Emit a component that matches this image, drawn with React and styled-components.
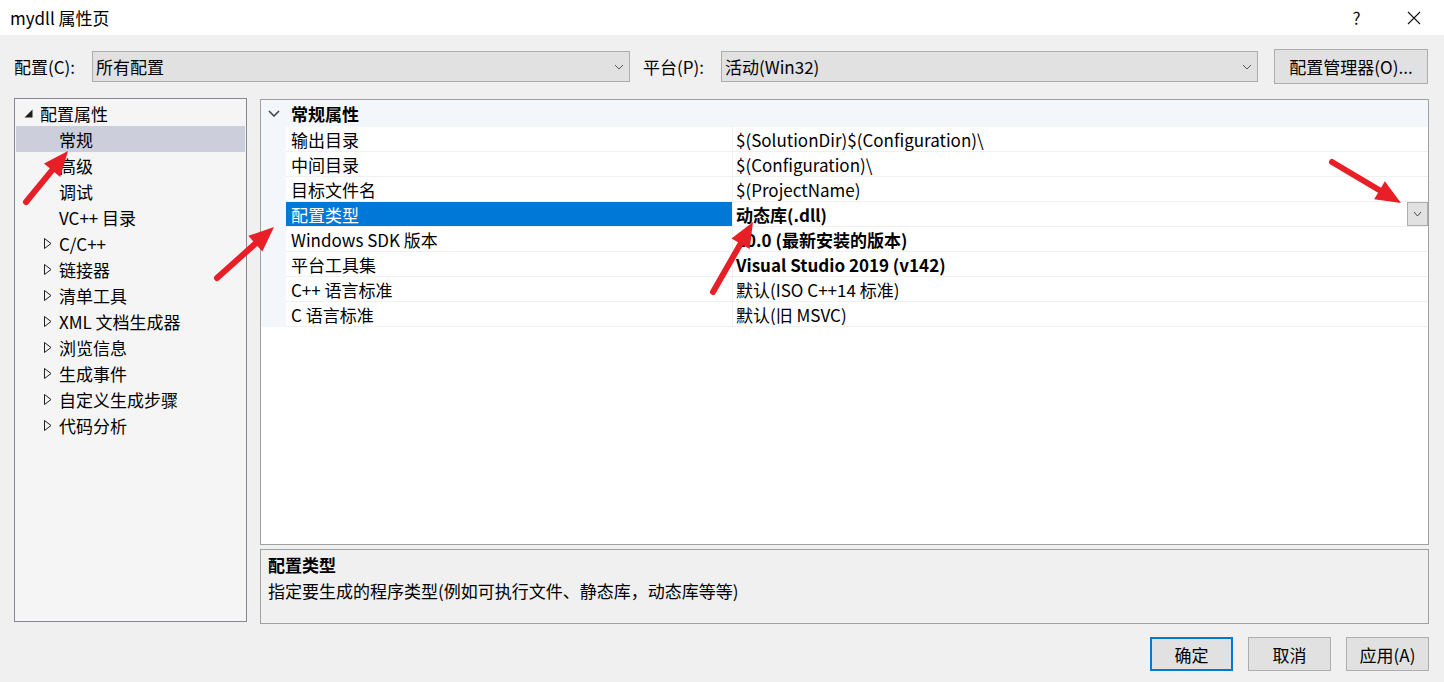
import React from 'react'
import styled, { createGlobalStyle } from 'styled-components';

const GlobalStyle = createGlobalStyle`
html, body {
  margin : 0;
  padding : 0;
  background : #f0f0f0;
}
body {
  font-family : "Noto Sans CJK SC", "Noto Sans", sans-serif;
  font-size : 17px;
  color : #000;
}
`;

const Window = styled.div`
position : relative;
width : 1444px;
height : 682px;
background : #f0f0f0;
display : flex;
flex-direction : column;
overflow : hidden;
`;

const TitleBar = styled.div`
height : 35px;
background : #fff;
display : flex;
align-items : center;
padding : 0 2px 0 10px;
`;

const Title = styled.div`
flex : 1;
font-size : 17px;
`;

const TitleButton = styled.div`
width : 57px;
height : 35px;
display : flex;
align-items : center;
justify-content : center;
font-size : 17px;
color : #111;
`;

const Body = styled.div`
flex : 1;
display : flex;
flex-direction : column;
padding : 14px 15px 0 14px;
`;

const ConfigRow = styled.div`
height : 35px;
display : flex;
align-items : center;
`;

const Label = styled.div`
width : ${({ w }) => w}px;
margin-left : ${({ ml }) => ml || 0}px;
flex-shrink : 0;
`;

const Select = styled.div`
width : ${({ w }) => w}px;
height : 31px;
box-sizing : border-box;
background : #e1e1e1;
border : 1px solid #adadad;
display : flex;
align-items : center;
justify-content : space-between;
padding : 0 5px 0 3px;
flex-shrink : 0;
`;

const Button = styled.div`
width : ${({ w }) => w || 83}px;
height : ${({ h }) => h || 34}px;
box-sizing : border-box;
margin-left : ${({ ml }) => ml || 0}px;
background : #e1e1e1;
border : ${({ primary }) => primary ? '2px solid #0078d7' : '1px solid #adadad'};
display : flex;
align-items : center;
justify-content : center;
flex-shrink : 0;
`;

const Main = styled.div`
margin-top : 14px;
display : flex;
gap : 13px;
height : 526px;
`;

const Tree = styled.div`
width : 233px;
height : 524px;
box-sizing : border-box;
border : 1px solid #828790;
background : #f5f5f5;
padding : 1px;
`;

const TreeRow = styled.div`
height : 26px;
display : flex;
align-items : center;
padding-left : ${({ level }) => level * 19 + 4}px;
background : ${({ selected }) => selected ? '#cccedb' : 'transparent'};
`;

const Twisty = styled.div`
width : 20px;
height : 26px;
display : flex;
align-items : center;
padding-left : ${({ open }) => open ? 4 : 5}px;
box-sizing : border-box;
flex-shrink : 0;
`;

const RightCol = styled.div`
flex : 1;
display : flex;
flex-direction : column;
padding-top : 1px;
gap : 4px;
`;

const Grid = styled.div`
height : 446px;
box-sizing : border-box;
border : 1px solid #a0a0a0;
background : #fff;
`;

const GroupHeader = styled.div`
height : 27px;
display : flex;
align-items : center;
background : #f3f6fb;
font-weight : bold;
`;

const GroupName = styled.span`
padding-left : 5px;
`;

const Strip = styled.div`
width : 25px;
align-self : stretch;
background : #f3f6fb;
display : flex;
align-items : center;
justify-content : center;
flex-shrink : 0;
`;

const PropRow = styled.div`
height : 25px;
display : flex;
`;

const NameCell = styled.div`
width : 447px;
box-sizing : border-box;
padding-left : 5px;
display : flex;
align-items : center;
border-bottom : 1px solid #f0f0f0;
border-right : 1px solid #f0f0f0;
background : ${({ selected }) => selected ? '#0078d7' : 'transparent'};
color : ${({ selected }) => selected ? '#fff' : '#000'};
`;

const ValueCell = styled.div`
flex : 1;
box-sizing : border-box;
padding-left : 3px;
display : flex;
align-items : center;
justify-content : space-between;
border-bottom : 1px solid #f0f0f0;
font-weight : ${({ bold }) => bold ? 'bold' : 'normal'};
`;

const DropButton = styled.div`
width : 21px;
height : 24px;
box-sizing : border-box;
background : #e1e1e1;
border : 1px solid #adadad;
display : flex;
align-items : center;
justify-content : center;
`;

const Desc = styled.div`
height : 75px;
box-sizing : border-box;
border : 1px solid #a0a0a0;
background : #f0f0f0;
padding : 2px 7px;
font-size : 17px;
line-height : 26px;
`;

const DescTitle = styled.div`
font-weight : bold;
`;

const Footer = styled.div`
margin-top : 13px;
display : flex;
justify-content : flex-end;
gap : 15px;
`;

const Overlay = styled.svg`
position : absolute;
left : 0;
top : 0;
pointer-events : none;
`;

const Chevron = ({ w = 8, h = 4, color = '#555', sw = 1 }) => (
  <svg width={w + 2} height={h + 2} viewBox={`-1 -1 ${w + 2} ${h + 2}`}>
    <polyline points={`0,0 ${w / 2},${h} ${w},0`} fill="none" stroke={color} strokeWidth={sw} />
  </svg>
);

const OpenIcon = () => (
  <svg width="9" height="9" viewBox="0 0 9 9">
    <polygon points="8.5,0.5 8.5,8.5 0.5,8.5" fill="#1e1e1e" />
  </svg>
);

const ClosedIcon = () => (
  <svg width="8" height="11" viewBox="0 0 8 11">
    <polygon points="0.5,0.5 7,5.5 0.5,10.5" fill="none" stroke="#1e1e1e" strokeWidth="1" />
  </svg>
);

const Arrow = ({ from, to }) => {
  const dx = to[0] - from[0];
  const dy = to[1] - from[1];
  const len = Math.hypot(dx, dy);
  const ux = dx / len, uy = dy / len;
  const bx = to[0] - ux * 25, by = to[1] - uy * 25;
  const nx = -uy * 10.5, ny = ux * 10.5;
  return (
    <g>
      <line x1={from[0]} y1={from[1]} x2={bx + ux * 4} y2={by + uy * 4} stroke="#e81f27" strokeWidth="6" strokeLinecap="round" />
      <polygon points={`${to[0]},${to[1]} ${bx + nx},${by + ny} ${bx - nx},${by - ny}`} fill="#e81f27" />
    </g>
  );
};

const TreeItems = [
  { name : "配置属性", level : 0, twisty : "open" },
  { name : "常规", level : 1, selected : true },
  { name : "高级", level : 1 },
  { name : "调试", level : 1 },
  { name : "VC++ 目录", level : 1 },
  { name : "C/C++", level : 1, twisty : "closed" },
  { name : "链接器", level : 1, twisty : "closed" },
  { name : "清单工具", level : 1, twisty : "closed" },
  { name : "XML 文档生成器", level : 1, twisty : "closed" },
  { name : "浏览信息", level : 1, twisty : "closed" },
  { name : "生成事件", level : 1, twisty : "closed" },
  { name : "自定义生成步骤", level : 1, twisty : "closed" },
  { name : "代码分析", level : 1, twisty : "closed" },
]

const Props = [
  { name : "输出目录", value : "$(SolutionDir)$(Configuration)\\" },
  { name : "中间目录", value : "$(Configuration)\\" },
  { name : "目标文件名", value : "$(ProjectName)" },
  { name : "配置类型", value : "动态库(.dll)", bold : true, selected : true },
  { name : "Windows SDK 版本", value : "10.0 (最新安装的版本)", bold : true },
  { name : "平台工具集", value : "Visual Studio 2019 (v142)", bold : true },
  { name : "C++ 语言标准", value : "默认(ISO C++14 标准)" },
  { name : "C 语言标准", value : "默认(旧 MSVC)" },
]

function App() {
  return (
    <Window>
      <GlobalStyle />
      <TitleBar>
        <Title>mydll 属性页</Title>
        <TitleButton>?</TitleButton>
        <TitleButton>
          <svg width="14" height="14" viewBox="0 0 14 14">
            <path d="M1 1 L13 13 M13 1 L1 13" stroke="#111" strokeWidth="1.1" />
          </svg>
        </TitleButton>
      </TitleBar>

      <Body>
        <ConfigRow>
          <Label w={78}>配置(C):</Label>
          <Select w={538}>
            所有配置
            <Chevron />
          </Select>
          <Label w={78} ml={13}>平台(P):</Label>
          <Select w={537}>
            活动(Win32)
            <Chevron />
          </Select>
          <Button w={154} h={35} ml={16}>配置管理器(O)...</Button>
        </ConfigRow>

        <Main>
          <Tree>
            {TreeItems.map((item) => (
              <TreeRow key={item.name} level={item.level} selected={item.selected}>
                <Twisty open={item.twisty === "open"}>
                  {item.twisty === "open" && <OpenIcon />}
                  {item.twisty === "closed" && <ClosedIcon />}
                </Twisty>
                {item.name}
              </TreeRow>
            ))}
          </Tree>

          <RightCol>
            <Grid>
              <GroupHeader>
                <Strip>
                  <Chevron w={10} h={5} color="#444" sw={1.6} />
                </Strip>
                <GroupName>常规属性</GroupName>
              </GroupHeader>
              {Props.map((p) => (
                <PropRow key={p.name}>
                  <Strip />
                  <NameCell selected={p.selected}>{p.name}</NameCell>
                  <ValueCell bold={p.bold}>
                    {p.value}
                    {p.selected && (
                      <DropButton>
                        <Chevron w={7} h={4} color="#444" />
                      </DropButton>
                    )}
                  </ValueCell>
                </PropRow>
              ))}
            </Grid>
            <Desc>
              <DescTitle>配置类型</DescTitle>
              <div>指定要生成的程序类型(例如可执行文件、静态库，动态库等等)</div>
            </Desc>
          </RightCol>
        </Main>

        <Footer>
          <Button primary>确定</Button>
          <Button>取消</Button>
          <Button>应用(A)</Button>
        </Footer>
      </Body>

      <Overlay width="1444" height="682" viewBox="0 0 1444 682">
        <Arrow from={[26, 202]} to={[68, 151]} />
        <Arrow from={[217, 278]} to={[274, 227]} />
        <Arrow from={[713, 292]} to={[753, 222]} />
        <Arrow from={[1332, 162]} to={[1401, 203]} />
      </Overlay>
    </Window>
  )
}

export default App;
